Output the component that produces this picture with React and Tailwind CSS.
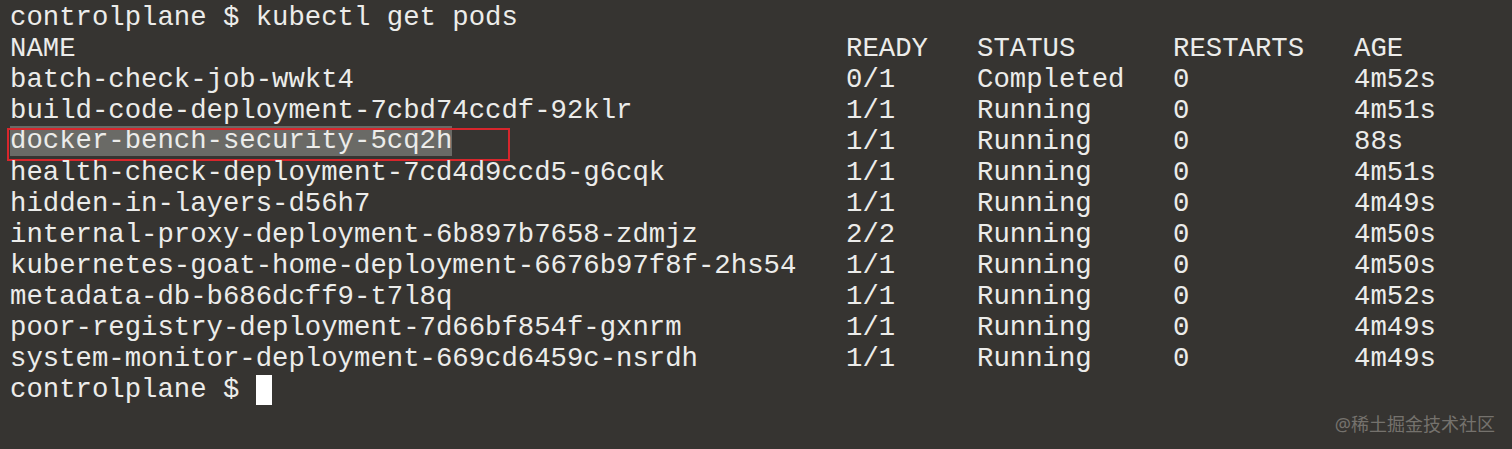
import React from 'react';

const pods = [
  ['batch-check-job-wwkt4', '0/1', 'Completed', '0', '4m52s'],
  ['build-code-deployment-7cbd74ccdf-92klr', '1/1', 'Running', '0', '4m51s'],
  ['docker-bench-security-5cq2h', '1/1', 'Running', '0', '88s'],
  ['health-check-deployment-7cd4d9ccd5-g6cqk', '1/1', 'Running', '0', '4m51s'],
  ['hidden-in-layers-d56h7', '1/1', 'Running', '0', '4m49s'],
  ['internal-proxy-deployment-6b897b7658-zdmjz', '2/2', 'Running', '0', '4m50s'],
  ['kubernetes-goat-home-deployment-6676b97f8f-2hs54', '1/1', 'Running', '0', '4m50s'],
  ['metadata-db-b686dcff9-t7l8q', '1/1', 'Running', '0', '4m52s'],
  ['poor-registry-deployment-7d66bf854f-gxnrm', '1/1', 'Running', '0', '4m49s'],
  ['system-monitor-deployment-669cd6459c-nsrdh', '1/1', 'Running', '0', '4m49s'],
];

const Row = ({ cells, marked }) => (
  <div className="relative flex h-[31px] items-center whitespace-pre">
    <div className="w-[836px] shrink-0">
      {marked ? (
        <span className="inline-block h-[30px] bg-[#6a6a66] align-top leading-[30px]">{cells[0]}</span>
      ) : (
        cells[0]
      )}
    </div>
    <div className="w-[131px] shrink-0">{cells[1]}</div>
    <div className="w-[196px] shrink-0">{cells[2]}</div>
    <div className="w-[181px] shrink-0">{cells[3]}</div>
    <div>{cells[4]}</div>
    {marked && (
      <span className="absolute -left-[3px] top-[2px] h-[33px] w-[503px] border-2 border-[#d8262c]"></span>
    )}
  </div>
);

export default function App() {
  return (
    <div className="relative h-[449px] w-[1512px] overflow-hidden bg-[#363431] pl-[10px] pt-[2px] text-[27.3px] leading-[31px] text-[#ececea] [font-family:'Liberation_Mono',monospace]">
      <div className="flex h-[31px] items-center whitespace-pre">controlplane $ kubectl get pods</div>
      <Row cells={['NAME', 'READY', 'STATUS', 'RESTARTS', 'AGE']} />
      {pods.map((p, i) => (
        <Row key={p[0]} cells={p} marked={i === 2} />
      ))}
      <div className="flex h-[31px] items-center whitespace-pre">
        controlplane $ <span className="inline-block h-[30px] w-[16px] bg-white"></span>
      </div>
      <div className="absolute bottom-[16px] right-[17px] text-[18px] leading-none text-[#75726d] [font-family:'Noto_Sans','Noto_Sans_CJK_SC',sans-serif]">
        @稀土掘金技术社区
      </div>
    </div>
  );
}
